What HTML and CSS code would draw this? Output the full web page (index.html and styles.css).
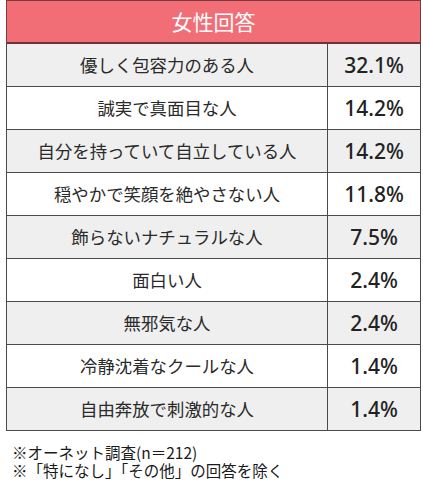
FILE: index.html
```html
<!DOCTYPE html>
<html lang="ja">
<head>
<meta charset="utf-8">
<link rel="stylesheet" href="styles.css">
</head>
<body>
<div class="wrap">
<table class="rank">
<colgroup><col class="c-label"><col class="c-pct"></colgroup>
<thead>
<tr><th colspan="2" class="head">女性回答</th></tr>
</thead>
<tbody>
<tr class="odd"><td class="label">優しく包容力のある人</td><td class="pct">32.1%</td></tr>
<tr><td class="label">誠実で真面目な人</td><td class="pct">14.2%</td></tr>
<tr class="odd"><td class="label">自分を持っていて自立している人</td><td class="pct">14.2%</td></tr>
<tr><td class="label">穏やかで笑顔を絶やさない人</td><td class="pct">11.8%</td></tr>
<tr class="odd"><td class="label">飾らないナチュラルな人</td><td class="pct">7.5%</td></tr>
<tr><td class="label">面白い人</td><td class="pct">2.4%</td></tr>
<tr class="odd"><td class="label">無邪気な人</td><td class="pct">2.4%</td></tr>
<tr><td class="label">冷静沈着なクールな人</td><td class="pct">1.4%</td></tr>
<tr class="odd"><td class="label">自由奔放で刺激的な人</td><td class="pct">1.4%</td></tr>
</tbody>
</table>
<div class="notes">
<p>※オーネット調査(n＝212)</p>
<p>※「特になし」「その他」の回答を除く</p>
</div>
</div>
</body>
</html>
```
FILE: styles.css
```css
html, body {
  margin: 0;
  padding: 0;
  background: #ffffff;
}
body {
  font-family: "Noto Sans CJK JP", "Noto Sans", sans-serif;
  color: #222222;
}
.wrap {
  padding-left: 6px;
  width: 414px;
}
.rank {
  border-collapse: collapse;
  width: 414px;
  table-layout: fixed;
}
.c-label {
  width: 321px;
}
.c-pct {
  width: 93px;
}
.head {
  height: 41px;
  padding: 0;
  background: #f26e77;
  color: #ffffff;
  font-size: 21px;
  font-weight: normal;
  text-align: center;
  border: 1px solid #7a3a3e;
  border-bottom: 2px solid #6e3438;
  line-height: 1;
}
.rank td {
  height: 42px;
  padding: 0;
  border: 1px solid #4a4a4a;
  text-align: center;
  line-height: 1;
  white-space: nowrap;
}
.rank tr.odd td {
  background: #efefef;
}
.label {
  font-size: 17.4px;
  color: #2a2a2a;
}
.pct {
  font-family: "Noto Sans", sans-serif;
  font-size: 21px;
  font-weight: 500;
  color: #222222;
}
.notes {
  margin-top: 12px;
  padding-left: 6px;
  font-size: 15.5px;
  line-height: 18px;
  color: #1a1a1a;
}
.notes p {
  margin: 0;
}
```
